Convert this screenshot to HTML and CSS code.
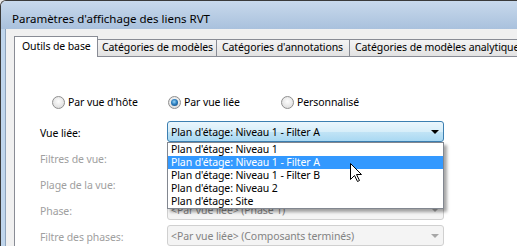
FILE: index.html
```html
<!DOCTYPE html>
<html lang="fr">
<head>
    <meta charset="UTF-8">
    <meta name="viewport" content="width=device-width, initial-scale=1.0">
    <title>Paramètres d'affichage des liens RVT</title>
    <link rel="stylesheet" href="styles.css">
</head>
<body>
    <div class="window">
        <div class="titlebar">Paramètres d'affichage des liens RVT</div>
        <div class="frame">
            <div class="client">
                <div class="tabs">
                    <div class="tab active">Outils de base</div>
                    <div class="tab t2">Catégories de modèles</div>
                    <div class="tab t3">Catégories d'annotations</div>
                    <div class="tab t4">Catégories de modèles analytiques</div>
                </div>
                <div class="panel">
                    <div class="radios">
                        <label class="radio"><span class="dot"></span>Par vue d'hôte</label>
                        <label class="radio checked"><span class="dot"></span>Par vue liée</label>
                        <label class="radio"><span class="dot"></span>Personnalisé</label>
                    </div>

                    <div class="form">
                        <span class="label">Vue liée:</span>
                        <div class="combo-wrap">
                            <div class="combo open">
                                <span>Plan d'étage: Niveau 1 - Filter A</span>
                                <span class="arrow"></span>
                            </div>
                            <!-- liste déroulante ouverte -->
                            <ul class="dropdown">
                                <li>Plan d'étage: Niveau 1</li>
                                <li class="selected">Plan d'étage: Niveau 1 - Filter A</li>
                                <li>Plan d'étage: Niveau 1 - Filter B</li>
                                <li>Plan d'étage: Niveau 2</li>
                                <li>Plan d'étage: Site</li>
                            </ul>
                            <svg class="cursor" width="13" height="20" viewBox="0 0 13 20">
                                <path d="M0.5 0.5 L0.5 16.5 L4.5 12.5 L7.5 18.5 L9.5 17.5 L6.5 11.5 L11.5 11.5 Z" fill="#fff" stroke="#000" stroke-width="1"/>
                            </svg>
                        </div>

                        <!-- ces deux listes sont cachées sous la liste ouverte -->
                        <span class="label disabled">Filtres de vue:</span>
                        <div class="combo disabled"><span></span><span class="arrow"></span></div>

                        <span class="label disabled">Plage de la vue:</span>
                        <div class="combo disabled"><span></span><span class="arrow"></span></div>

                        <span class="label disabled">Phase:</span>
                        <div class="combo disabled"><span>&lt;Par vue liée&gt; (Phase 1)</span><span class="arrow"></span></div>

                        <span class="label disabled">Filtre des phases:</span>
                        <div class="combo disabled"><span>&lt;Par vue liée&gt; (Composants terminés)</span><span class="arrow"></span></div>
                    </div>
                </div>
            </div>
        </div>
    </div>
</body>
</html>
```

FILE: styles.css
```css
html, body {
    margin: 0;
    height: 100%;
    overflow: hidden;
}
body {
    font-family: "Noto Sans", sans-serif;
    font-size: 10.5px;
    letter-spacing: -0.1px;
    color: #000;
    background-color: #e9e9e9;
}
.window {
    height: 100%;
    display: flex;
    flex-direction: column;
    border-top: 1px solid #3a3a3a;
    border-left: 1px solid #3a3a3a;
    border-top-left-radius: 6px;
    overflow: hidden;
    box-sizing: border-box;
}
.titlebar {
    height: 29px;
    box-sizing: border-box;
    padding: 10px 0 0 11px;
    font-size: 11.5px;
    letter-spacing: 0;
    line-height: 16px;
    background: linear-gradient(#c8d9ec, #a9c1dd);
    white-space: nowrap;
}
.frame {
    flex: 1;
    display: flex;
    padding-left: 4px;
    background-color: #bfd5ec;
}
.client {
    flex: 1;
    display: flex;
    flex-direction: column;
    padding: 7px 0 0 8px;
    border-left: 1px solid #8ea3bb;
    background-color: #f0f0f0;
    overflow: hidden;
}

/* onglets */
.tabs {
    display: flex;
    align-items: flex-end;
    height: 20px;
    white-space: nowrap;
}
.tab {
    flex: none;
    box-sizing: border-box;
    height: 17px;
    line-height: 15px;
    padding-left: 5px;
    border-top: 1px solid #898c95;
    border-right: 1px solid #898c95;
    background: linear-gradient(#f4f4f4, #e2e2e2);
    overflow: hidden;
}
.tab.active {
    position: relative;
    z-index: 1;
    width: 84px;
    height: 21px;
    margin-bottom: -1px;
    padding-left: 7px;
    line-height: 18px;
    border-left: 1px solid #898c95;
    background: #fff;
}
.tab.t2 { width: 119px; padding-left: 4px; }
.tab.t3 { width: 133px; }
.tab.t4 { width: 200px; }

.panel {
    flex: 1;
    padding-left: 25px;
    border-top: 1px solid #898c95;
    border-left: 1px solid #898c95;
    background-color: #fff;
}

/* boutons radio */
.radios {
    display: grid;
    grid-template-columns: 116px 113px auto;
    margin: 39px 0 0 12px;
    height: 13px;
    line-height: 13px;
}
.radio {
    display: flex;
    align-items: center;
    white-space: nowrap;
}
.dot {
    width: 13px;
    height: 13px;
    box-sizing: border-box;
    margin-right: 3px;
    border: 1px solid #8f8f8f;
    border-radius: 50%;
    background: radial-gradient(circle at 50% 40%, #fdfdfd, #d6d6d6);
    display: flex;
    align-items: center;
    justify-content: center;
}
.radio.checked .dot::after {
    content: "";
    width: 7px;
    height: 7px;
    border-radius: 50%;
    background: radial-gradient(circle at 45% 40%, #9ad6f7 0%, #2c7fc0 45%, #123f6e 100%);
}

/* formulaire */
.form {
    display: grid;
    grid-template-columns: 127px 277px;
    grid-auto-rows: 21px;
    row-gap: 5px;
    margin-top: 12px;
    align-items: center;
}
.label {
    padding-top: 2px;
    white-space: nowrap;
}
.label.disabled {
    color: #a0a0a0;
}
.combo-wrap {
    position: relative;
    height: 21px;
}
.combo {
    height: 21px;
    box-sizing: border-box;
    display: flex;
    align-items: center;
    justify-content: space-between;
    padding: 0 4px 0 3px;
    border-radius: 3px;
    white-space: nowrap;
}
.combo.open {
    border: 1px solid #3c7fb1;
    background: linear-gradient(#eaf6fd, #d7eef9 50%, #c2e4f6 51%, #a9d8f2);
}
.combo.disabled {
    border: 1px solid #d0d0d0;
    background-color: #f4f4f4;
    color: #838383;
}
.arrow {
    width: 0;
    height: 0;
    border-top: 4px solid #000;
    border-left: 4px solid transparent;
    border-right: 4px solid transparent;
}
.combo.disabled .arrow {
    border-top-color: #a7a7a7;
}

/* liste déroulante */
.dropdown {
    position: absolute;
    top: 21px;
    left: 0;
    z-index: 5;
    width: 277px;
    box-sizing: border-box;
    margin: 0;
    padding: 0;
    list-style: none;
    border: 1px solid #828790;
    background-color: #fff;
    box-shadow: 3px 3px 3px rgba(0, 0, 0, 0.35);
}
.dropdown li {
    height: 13px;
    line-height: 13px;
    padding-left: 3px;
    white-space: nowrap;
}
.dropdown li.selected {
    background-color: #3399ff;
    color: #fff;
}
.cursor {
    position: absolute;
    left: 183px;
    top: 42px;
    z-index: 6;
}
```
